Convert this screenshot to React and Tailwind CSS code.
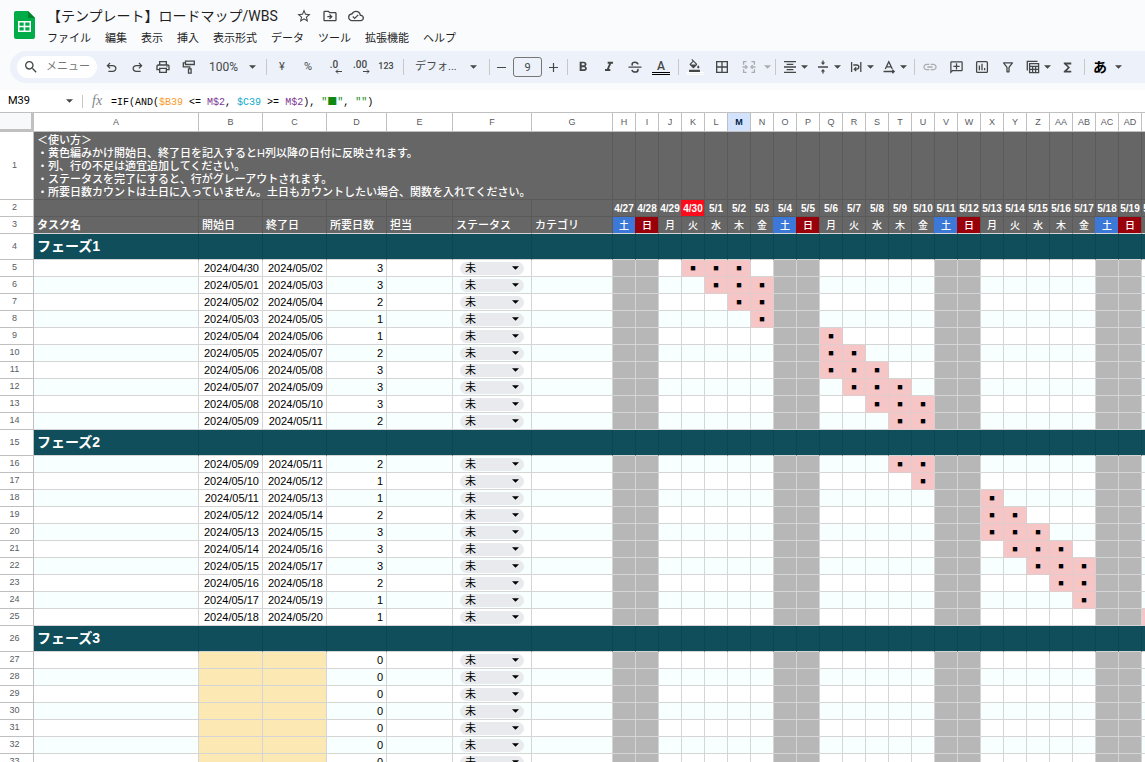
import { useState } from "react";
import {
  MdBorderAll,
  MdFormatAlignCenter,
  MdFormatBold,
  MdFormatColorFill,
  MdFormatItalic,
  MdFunctions,
  MdLink,
  MdOutlineAddComment,
  MdOutlineCloudDone,
  MdOutlineDriveFileMove,
  MdOutlinePrint,
  MdSearch,
  MdStarBorder,
} from "react-icons/md";

const MENUS = ["ファイル", "編集", "表示", "挿入", "表示形式", "データ", "ツール", "拡張機能", "ヘルプ"];
const WEEKDAYS = ["日", "月", "火", "水", "木", "金", "土"];
const DAY_MS = 24 * 60 * 60 * 1000;
const DAY_COUNT = 31;
const LAST_ROW = 40;
const TODAY = "2024/04/30";
const ACTIVE_COLUMN = "M";

const columnName = (index) => {
  const letter = String.fromCharCode(65 + (index % 26));
  return index < 26 ? letter : columnName(Math.floor(index / 26) - 1) + letter;
};

const parseDate = (text) => {
  const [y, m, d] = text.split("/").map(Number);
  return Date.UTC(y, m - 1, d);
};

// calendar columns start at H
const days = Array.from({ length: DAY_COUNT }, (_, i) => {
  const time = parseDate("2024/04/27") + i * DAY_MS;
  const date = new Date(time);
  const weekday = date.getUTCDay();
  return {
    time,
    weekday,
    column: columnName(i + 7),
    label: `${date.getUTCMonth() + 1}/${date.getUTCDate()}`,
    weekend: weekday === 0 || weekday === 6,
    today: time === parseDate(TODAY),
  };
});

const columns = [
  { name: "A", title: "タスク名", width: "w-[165px]" },
  { name: "B", title: "開始日", width: "w-16" },
  { name: "C", title: "終了日", width: "w-16" },
  { name: "D", title: "所要日数", width: "w-[60px]" },
  { name: "E", title: "担当", width: "w-[66px]" },
  { name: "F", title: "ステータス", width: "w-[79px]" },
  { name: "G", title: "カテゴリ", width: "w-[81px]" },
];

const phases = [
  {
    row: 4,
    name: "フェーズ1",
    tasks: [
      ["2024/04/30", "2024/05/02", 3],
      ["2024/05/01", "2024/05/03", 3],
      ["2024/05/02", "2024/05/04", 2],
      ["2024/05/03", "2024/05/05", 1],
      ["2024/05/04", "2024/05/06", 1],
      ["2024/05/05", "2024/05/07", 2],
      ["2024/05/06", "2024/05/08", 3],
      ["2024/05/07", "2024/05/09", 3],
      ["2024/05/08", "2024/05/10", 3],
      ["2024/05/09", "2024/05/11", 2],
    ],
  },
  {
    row: 15,
    name: "フェーズ2",
    tasks: [
      ["2024/05/09", "2024/05/11", 2],
      ["2024/05/10", "2024/05/12", 1],
      ["2024/05/11", "2024/05/13", 1],
      ["2024/05/12", "2024/05/14", 2],
      ["2024/05/13", "2024/05/15", 3],
      ["2024/05/14", "2024/05/16", 3],
      ["2024/05/15", "2024/05/17", 3],
      ["2024/05/16", "2024/05/18", 2],
      ["2024/05/17", "2024/05/19", 1],
      ["2024/05/18", "2024/05/20", 1],
    ],
  },
  {
    row: 26,
    name: "フェーズ3",
    tasks: Array.from({ length: LAST_ROW - 26 }, () => ["", "", 0]),
  },
];

/* ---- icons ---- */

const Caret = ({ className = "" }) => (
  <svg viewBox="0 0 8 4" className={`w-[7px] h-1 shrink-0 fill-current ${className}`} aria-hidden="true">
    <path d="M0 0h8L4 4z" />
  </svg>
);

const SheetsLogo = () => (
  <svg viewBox="0 0 21 28" className="w-[21px] h-7" aria-hidden="true">
    <path d="M2 0h12l7 7v19a2 2 0 0 1-2 2H2a2 2 0 0 1-2-2V2a2 2 0 0 1 2-2z" fill="#00ac47" />
    <path d="M14 0l7 7h-7z" fill="#00832d" />
    <path d="M4 10h13v11H4zM5.500 11.500v3.200h4.200v-3.200zM11.300 11.500v3.200h4.200v-3.200zM5.500 16.300v3.200h4.200v-3.200zM11.300 16.300v3.200h4.200v-3.200z" fill="#fff" fillRule="evenodd" />
  </svg>
);

const SymbolIcon = ({ d }) => (
  <svg viewBox="0 -960 960 960" className="size-[15px] fill-current" aria-hidden="true">
    <path d={d} />
  </svg>
);

const LineIcon = ({ children }) => (
  <svg viewBox="0 0 16 16" className="size-4" fill="none" stroke="currentColor" strokeWidth="1.3" aria-hidden="true">
    {children}
  </svg>
);

const UndoIcon = () => (
  <SymbolIcon d="M280-200v-80h284q63 0 109.500-40T720-420q0-60-46.500-100T564-560H312l104 104-56 56-200-200 200-200 56 56-104 104h252q97 0 169.500 63T800-420q0 94-72.500 157T564-200H280Z" />
);

const RedoIcon = () => (
  <SymbolIcon d="M396-200q-97 0-169.500-63T160-420q0-94 72.500-157T396-640h252L544-744l56-56 200 200-200 200-56-56 104-104H396q-63 0-109.500 40T240-420q0 60 46.500 100T396-280h284v80H396Z" />
);

const PaintIcon = () => (
  <LineIcon>
    <path d="M4.500 2.200h8.800v3.300H4.500zM4.500 3.800H2.300v4h6.500v2M7.500 9.800h2.600v4.400H7.500z" />
  </LineIcon>
);

const StrikeIcon = () => (
  <LineIcon>
    <path d="M1.500 8.200h13" />
    <path d="M11 5.400C10.700 4 9.600 3.200 8 3.200S5.100 4 5.100 5.300c0 .5.200.9.500 1.200M5 10.800c.3 1.400 1.400 2.200 3 2.200s3-.8 3-2.100c0-.4-.1-.7-.3-1" strokeWidth="1.600" />
  </LineIcon>
);

const MergeIcon = () => (
  <LineIcon>
    <path d="M5.500 2.700H2.600v3M5.500 13.300H2.600v-3M10.500 2.700h2.900v3M10.500 13.300h2.900v-3M1.500 8h4M14.500 8h-4" />
    <path d="M4.300 6.200L6.100 8 4.300 9.800M11.700 6.200L9.900 8l1.800 1.800" />
  </LineIcon>
);

const VerticalAlignIcon = () => (
  <LineIcon>
    <path d="M3 8h10M8 1.500v2.500M8 14.500V12" />
    <path d="M5.800 3.600h4.400L8 6zM5.800 12.400h4.400L8 10z" fill="currentColor" stroke="none" />
  </LineIcon>
);

const WrapIcon = () => (
  <LineIcon>
    <path d="M3.600 3v10M12.800 3v10M5.300 6h3.400a2 2 0 0 1 0 4.200H6.500M8.200 8.300L6.300 10.200l1.900 1.900" />
  </LineIcon>
);

const RotateIcon = () => (
  <LineIcon>
    <path d="M4.300 10L7.800 2.800 11.300 10M5.600 7.800h4.400M2.500 12.500h10.500M11.300 10.700l1.900 1.800-1.900 1.800" />
  </LineIcon>
);

const ChartIcon = () => (
  <LineIcon>
    <rect x="2.600" y="2.600" width="10.800" height="10.800" rx="1" />
    <path d="M5.400 6.500v4.700M8 4.800v6.400M10.600 9v2.200" />
  </LineIcon>
);

const FilterIcon = () => (
  <LineIcon>
    <path d="M3.600 3.900h8.800L9 8.300v4.500H7V8.300z" strokeLinejoin="round" />
  </LineIcon>
);

const TableViewIcon = () => (
  <LineIcon>
    <path d="M2.300 11.500V2.300h10.200" />
    <path d="M4.600 4.600h9v9h-9zM4.600 7.300h9M4.600 10.400h9M7.600 7.300v6.300M10.600 7.300v6.300" />
  </LineIcon>
);

/* ---- toolbar parts ---- */

const ToolButton = ({ label, wide, children }) => (
  <button
    type="button"
    aria-label={label}
    className={`flex items-center justify-center h-6 shrink-0 ${wide ? "w-[27px]" : "w-[26px]"}`}
  >
    {children}
  </button>
);

const MenuButton = ({ label, children }) => (
  <button type="button" aria-label={label} className="flex items-center gap-[3px] w-[33px] h-6 pl-1 shrink-0">
    {children}
    <Caret />
  </button>
);

const Divider = () => <div className="w-px h-4 ml-1 mr-[2px] bg-[#c7c7c7] shrink-0" />;

const ColorBar = ({ className }) => (
  <span className="flex flex-col gap-px w-[18px]">
    <span className={`h-px ${className}`} />
    <span className={`h-px ${className}`} />
  </span>
);

const Decimal = ({ text, arrow }) => (
  <span className="flex flex-col items-center text-[10px] leading-[8px] font-medium">
    {text}
    <svg viewBox="0 0 8 5" className="w-2 h-[5px] self-end translate-x-1" fill="none" stroke="currentColor" aria-hidden="true">
      <path d={arrow} />
    </svg>
  </span>
);

const Toolbar = () => {
  const [zoom, setZoom] = useState("100%");
  const [fontSize, setFontSize] = useState("9");

  return (
    <div className="flex items-center h-8 ml-[10px] pl-[7px] rounded-l-full bg-[#edf2fa] text-[#444746] text-[11px] overflow-hidden shrink-0">
      <div className="flex items-center w-20 h-[22px] mr-px pl-[6px] rounded-full bg-white shrink-0">
        <MdSearch className="size-4 mr-[7px] shrink-0" />
        <input
          type="text"
          aria-label="メニュー"
          placeholder="メニュー"
          className="w-12 h-4 leading-4 outline-none placeholder:text-[#747775]"
        />
      </div>
      <ToolButton label="元に戻す"><UndoIcon /></ToolButton>
      <ToolButton label="やり直し"><RedoIcon /></ToolButton>
      <ToolButton label="印刷"><MdOutlinePrint className="size-4" /></ToolButton>
      <ToolButton label="書式を貼り付け"><PaintIcon /></ToolButton>
      <div className="relative flex items-center w-[60px] shrink-0">
        <select
          aria-label="ズーム"
          value={zoom}
          onChange={(e) => setZoom(e.target.value)}
          className="w-full pl-[7px] appearance-none outline-none text-[12px]"
        >
          <option>100%</option>
          <option>75%</option>
          <option>50%</option>
        </select>
        <Caret className="absolute right-[6px] pointer-events-none" />
      </div>
      <Divider />
      <ToolButton label="通貨の表示形式">¥</ToolButton>
      <ToolButton label="パーセント表示">%</ToolButton>
      <ToolButton label="小数点以下の桁数を減らす">
        <Decimal text=".0" arrow="M8 2.500H2M4 .5L2 2.500l2 2" />
      </ToolButton>
      <ToolButton label="小数点以下の桁数を増やす">
        <Decimal text=".00" arrow="M0 2.500h6M4 .5l2 2-2 2" />
      </ToolButton>
      <ToolButton label="表示形式の詳細設定">
        <span className="text-[9px] font-medium">123</span>
      </ToolButton>
      <Divider />
      <div className="relative flex items-center w-[79px] shrink-0">
        <select aria-label="フォント" className="w-full pl-[9px] appearance-none outline-none">
          <option>デフォ...</option>
          <option>Arial</option>
          <option>Roboto</option>
        </select>
        <Caret className="absolute right-2 pointer-events-none" />
      </div>
      <Divider />
      <button type="button" aria-label="フォントサイズを縮小" className="flex justify-center w-[19px] shrink-0">
        <svg viewBox="0 0 9 9" className="size-[9px]" stroke="currentColor" strokeWidth="1.200"><path d="M0 4.500h9" /></svg>
      </button>
      <input
        type="text"
        aria-label="フォントサイズ"
        value={fontSize}
        onChange={(e) => setFontSize(e.target.value)}
        className="w-[29px] h-5 mx-[2px] rounded-[3px] border border-[#747775] text-center outline-none shrink-0"
      />
      <button type="button" aria-label="フォントサイズを拡大" className="flex justify-center w-[19px] shrink-0">
        <svg viewBox="0 0 9 9" className="size-[9px]" stroke="currentColor" strokeWidth="1.200"><path d="M0 4.500h9M4.500 0v9" /></svg>
      </button>
      <Divider />
      <ToolButton label="太字"><MdFormatBold className="size-4" /></ToolButton>
      <ToolButton label="斜体"><MdFormatItalic className="size-4" /></ToolButton>
      <ToolButton label="取り消し線"><StrikeIcon /></ToolButton>
      <ToolButton label="テキストの色">
        <span className="flex flex-col items-center leading-[12px] text-[12px] font-medium">
          A
          <ColorBar className="bg-black" />
        </span>
      </ToolButton>
      <Divider />
      <ToolButton label="塗りつぶしの色" wide>
        <span className="flex flex-col items-center">
          <MdFormatColorFill className="size-[13px]" />
          <ColorBar className="bg-white" />
        </span>
      </ToolButton>
      <ToolButton label="枠線" wide><MdBorderAll className="size-4" /></ToolButton>
      <button type="button" aria-label="セルを結合" className="flex items-center justify-between w-9 pl-[6px] text-[#a9acb0] shrink-0">
        <MergeIcon />
        <Caret />
      </button>
      <Divider />
      <MenuButton label="水平方向の配置"><MdFormatAlignCenter className="size-4" /></MenuButton>
      <MenuButton label="垂直方向の配置"><VerticalAlignIcon /></MenuButton>
      <MenuButton label="テキストを折り返す"><WrapIcon /></MenuButton>
      <MenuButton label="テキストの回転"><RotateIcon /></MenuButton>
      <Divider />
      <ToolButton label="リンクを挿入"><MdLink className="size-4 text-[#a9acb0]" /></ToolButton>
      <ToolButton label="コメントを挿入"><MdOutlineAddComment className="size-[15px] -scale-x-100" /></ToolButton>
      <ToolButton label="グラフを挿入"><ChartIcon /></ToolButton>
      <ToolButton label="フィルタを作成"><FilterIcon /></ToolButton>
      <MenuButton label="フィルタ表示"><TableViewIcon /></MenuButton>
      <ToolButton label="関数"><MdFunctions className="size-[15px]" /></ToolButton>
      <Divider />
      <button type="button" aria-label="入力ツール" className="flex items-center gap-2 pl-[6px] text-[14px] shrink-0">
        <span className="font-bold text-black">あ</span>
        <Caret />
      </button>
    </div>
  );
};

const FormulaBar = () => {
  const [cell, setCell] = useState("M39");

  return (
    <div className="flex items-center h-[22px] mt-[7px] bg-white text-black shrink-0">
      <input
        type="text"
        aria-label="名前ボックス"
        value={cell}
        onChange={(e) => setCell(e.target.value)}
        className="w-[58px] pl-2 outline-none text-[11px]"
      />
      <Caret className="ml-2 text-[#444746]" />
      <div className="w-px h-[13px] ml-[9px] bg-[#c7c7c7]" />
      <span className="ml-[9px] w-[19px] font-['Liberation_Serif',serif] italic text-[14px] leading-4 text-[#80868b]">fx</span>
      <code className="font-['Liberation_Mono',monospace] text-[10px] whitespace-pre">
        =IF(AND(<span className="text-[#f7981d]">$B39</span> &lt;= <span className="text-[#7e3794]">M$2</span>,{" "}
        <span className="text-[#11a9cc]">$C39</span> &gt;= <span className="text-[#7e3794]">M$2</span>),{" "}
        <span className="text-[#118811]">
          "<span className="font-['Noto_Sans_CJK_JP',sans-serif]">■</span>"
        </span>
        , <span className="text-[#118811]">""</span>)
      </code>
    </div>
  );
};

/* ---- sheet ---- */

const RowHeader = ({ children }) => (
  <th
    scope="row"
    className="border-r border-b border-[#c0c0c0] bg-white pr-1 pb-[2px] text-[9px] leading-3 font-normal text-[#575b5f] text-center"
  >
    {children}
  </th>
);

// fills that cover the grid line on their left
const weekdayFill = (day) => {
  if (day?.weekday === 6) return "#3c78d8";
  if (day?.weekday === 0) return "#990009";
  return null;
};

const StatusSelect = ({ row }) => (
  <div className="relative flex items-center w-16 h-[13px] mx-auto rounded-full bg-[#e8eaed]">
    <select aria-label={`ステータス ${row}`} className="w-full h-[13px] pl-[5px] appearance-none outline-none leading-[13px]">
      <option>未</option>
      <option>完了</option>
    </select>
    <Caret className="absolute right-[5px] pointer-events-none" />
  </div>
);

const TaskRow = ({ row, task }) => {
  const [start, end, count] = task;
  const tint = row % 2 === 0 ? "bg-[#f8ffff]" : "bg-white";
  const dateFill = start ? "bg-white" : "bg-[#fce8b2]";
  const cell = "border-r border-b border-[#d5d5d5]";
  const inRange = (day) =>
    start && !day.weekend && day.time >= parseDate(start) && day.time <= parseDate(end);

  return (
    <tr className="h-[17px]">
      <RowHeader>{row}</RowHeader>
      <td className={`${cell} ${tint}`} />
      <td className={`${cell} ${dateFill} pr-[3px] text-right`}>{start}</td>
      <td className={`${cell} ${dateFill} pr-[3px] text-right`}>{end}</td>
      <td className={`${cell} ${tint} pr-[3px] text-right`}>{count}</td>
      <td className={`${cell} ${tint}`} />
      <td className={`${cell} ${tint}`}>
        <StatusSelect row={row} />
      </td>
      <td className={`${cell} ${tint}`} />
      {days.map((day) =>
        inRange(day) ? (
          <td key={day.time} className="border-r border-b border-[#e0cccc] bg-[#f5c6c5] text-center text-[9px]">
            ■
          </td>
        ) : (
          <td key={day.time} className={`${cell} ${day.weekend ? "bg-[#b7b7b7]" : tint}`} />
        )
      )}
    </tr>
  );
};

const PhaseRow = ({ row, name }) => (
  <tr className="h-[26px] bg-[#0f4e5a] text-white">
    <RowHeader>{row}</RowHeader>
    <td className="border-r border-r-[#0d4650] border-b border-b-[#d5d5d5] pl-[3px] text-[14px] font-bold">{name}</td>
    {[...columns.slice(1), ...days].map((c) => (
      <td key={c.column || c.name} className="border-r border-r-[#0d4650] border-b border-b-[#d5d5d5]" />
    ))}
  </tr>
);

const Sheet = () => {
  const dark = "border-r border-b border-[#5a5a5a]";
  const head = "border-r border-b border-[#c0c0c0] text-[9px]";

  return (
    <main className="flex-1 min-h-0 overflow-auto [scrollbar-width:none] border-t border-[#c0c0c0] bg-white">
      <table className="w-max table-fixed border-separate border-spacing-0 font-['Liberation_Sans','Noto_Sans_CJK_JP',sans-serif] text-[11px] leading-[13px] text-black">
        <colgroup>
          <col className="w-[34px]" />
          {columns.map((c) => (
            <col key={c.name} className={c.width} />
          ))}
          {days.map((day) => (
            <col key={day.time} className="w-[23px]" />
          ))}
        </colgroup>
        <thead>
          <tr className="h-[19px]">
            <td className="border-r-[3px] border-b-[3px] border-[#c0c0c0] bg-[#f8f9fa]" />
            {[...columns.map((c) => c.name), ...days.map((day) => day.column)].map((name) => (
              <th
                key={name}
                scope="col"
                className={`${head} ${
                  name === ACTIVE_COLUMN ? "bg-[#d3e3fd] font-bold text-[#041e49]" : "bg-white font-normal text-[#575b5f]"
                }`}
              >
                {name}
              </th>
            ))}
          </tr>
        </thead>
        <tbody>
          <tr className="h-[68px] bg-[#666666] text-white">
            <RowHeader>1</RowHeader>
            <td colSpan={7} className={`${dark} pt-px pl-[3px] font-medium whitespace-nowrap`}>
              ＜使い方＞
              <br />
              ・黄色編みかけ開始日、終了日を記入するとH列以降の日付に反映されます。
              <br />
              ・列、行の不足は適宜追加してください。
              <br />
              ・ステータスを完了にすると、行がグレーアウトされます。
              <br />
              ・所要日数カウントは土日に入っていません。土日もカウントしたい場合、関数を入れてください。
            </td>
            {days.map((day) => (
              <td key={day.time} className={dark} />
            ))}
          </tr>
          <tr className="h-[17px] bg-[#666666] text-white">
            <RowHeader>2</RowHeader>
            {columns.map((c) => (
              <td key={c.name} className={dark} />
            ))}
            {days.map((day, i) => (
              <td
                key={day.time}
                className={`border-r border-b border-b-[#5a5a5a] text-center text-[10px] font-bold whitespace-nowrap ${
                  day.today ? "bg-[#ff0c1c]" : ""
                } ${days[i + 1]?.today ? "border-r-[#ff0c1c]" : "border-r-[#5a5a5a]"}`}
              >
                {day.label}
              </td>
            ))}
          </tr>
          <tr className="h-[17px] bg-[#666666] text-white">
            <RowHeader>3</RowHeader>
            {columns.map((c, i) => (
              <th
                key={c.name}
                scope="col"
                className={`border-r border-r-[#5a5a5a] border-b border-b-[#d5d5d5] pl-[3px] text-left ${
                  i === 0 ? "font-bold" : "font-medium"
                }`}
              >
                {c.title}
              </th>
            ))}
            {days.map((day, i) => (
              <td
                key={day.time}
                className="border-r border-b border-b-[#d5d5d5] text-center text-[10px] font-medium"
                style={{
                  backgroundColor: weekdayFill(day),
                  borderRightColor: weekdayFill(days[i + 1]) || "#5a5a5a",
                }}
              >
                {WEEKDAYS[day.weekday]}
              </td>
            ))}
          </tr>
          {phases.map((phase) => [
            <PhaseRow key={phase.row} row={phase.row} name={phase.name} />,
            ...phase.tasks.map((task, i) => (
              <TaskRow key={phase.row + i + 1} row={phase.row + i + 1} task={task} />
            )),
          ])}
        </tbody>
      </table>
    </main>
  );
};

const App = () => {
  return (
    <div className="flex flex-col h-screen overflow-hidden bg-[#f9fbfd] font-[Roboto,'Noto_Sans_CJK_JP',sans-serif] text-[#1f1f1f]">
      <header className="flex gap-3 pl-[14px] pb-[3px] shrink-0">
        <div className="pt-[11px]">
          <SheetsLogo />
        </div>
        <div className="pt-[3px]">
          <div className="flex items-center gap-[10px] h-[26px] pb-px text-[#444746]">
            <h1 className="text-[14px] leading-6 text-[#1f1f1f] pr-2">【テンプレート】ロードマップ/WBS</h1>
            <button type="button" aria-label="スター"><MdStarBorder className="size-4" /></button>
            <button type="button" aria-label="移動"><MdOutlineDriveFileMove className="size-4" /></button>
            <button type="button" aria-label="ドキュメントのステータス"><MdOutlineCloudDone className="size-4" /></button>
          </div>
          <nav className="flex gap-[14px] h-[19px] text-[11px] leading-[19px]">
            {MENUS.map((menu) => (
              <button key={menu} type="button">
                {menu}
              </button>
            ))}
          </nav>
        </div>
      </header>
      <Toolbar />
      <FormulaBar />
      <Sheet />
    </div>
  );
};

export default App;
